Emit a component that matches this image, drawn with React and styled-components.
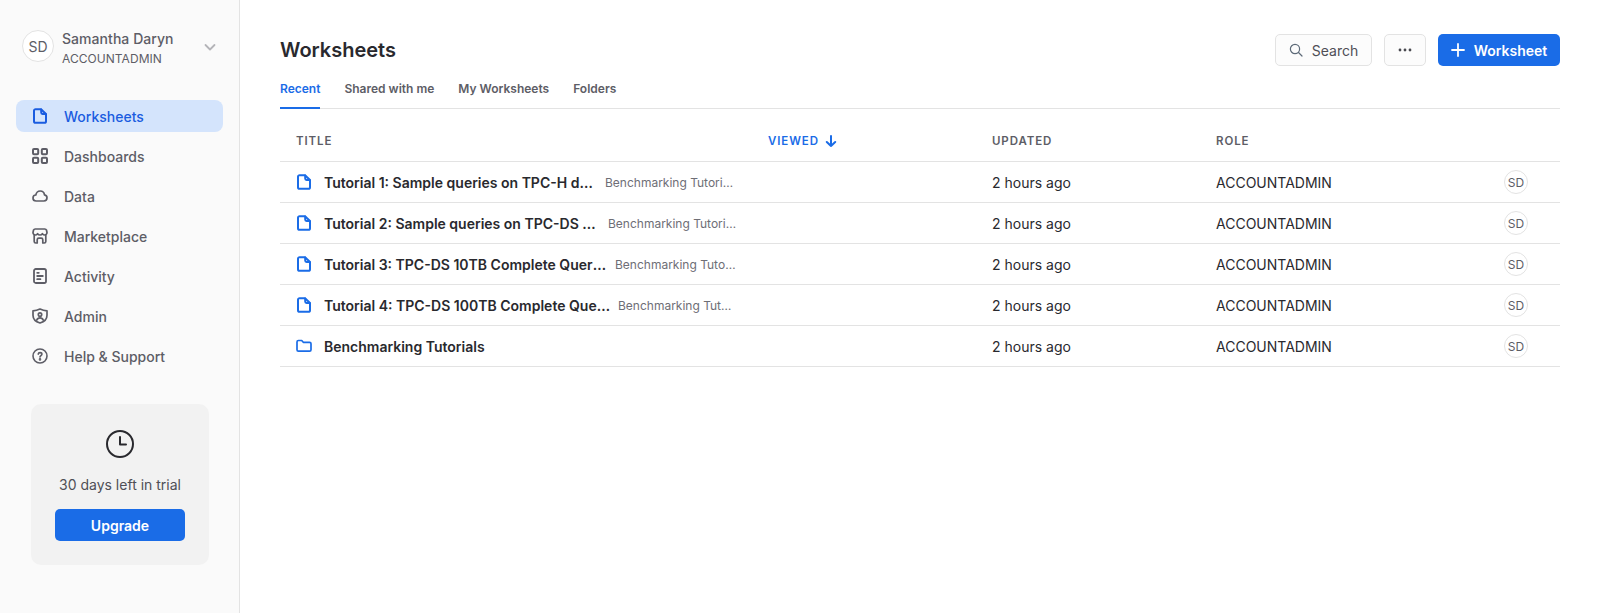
import React from "react";
import styled, { createGlobalStyle } from "styled-components";

const GlobalStyle = createGlobalStyle`
  html, body { margin: 0; padding: 0; height: 100%; background: #fff; }
  body { font-family: Inter, "Liberation Sans", sans-serif; color: #29292e; }
  #root { height: 100%; }
  * { box-sizing: border-box; }
`;

const BLUE = "#1a6ce7";

const Icon = ({ size = 16, width = 1.8, children }) => (
  <svg width={size} height={size} viewBox="0 0 16 16" fill="none" stroke="currentColor" strokeWidth={width} strokeLinecap="round" strokeLinejoin="round">
    {children}
  </svg>
);

const FileIcon = () => (
  <Icon width={2}>
    <path d="M9 1.2H3.6c-.9 0-1.6.7-1.6 1.6v10.4c0 .9.7 1.6 1.6 1.6h8.8c.9 0 1.6-.7 1.6-1.6V6L9 1.2Z" />
    <path d="M9.2 1.6v2.9c0 .8.6 1.4 1.4 1.4h3" />
  </Icon>
);
const FolderIcon = () => (
  <Icon width={1.7}>
    <path d="M1 3.9c0-.8.6-1.4 1.4-1.4h3.3l1.6 1.8h6.3c.8 0 1.4.6 1.4 1.4v6c0 .8-.6 1.4-1.4 1.4H2.4c-.8 0-1.4-.6-1.4-1.4V3.9Z" />
  </Icon>
);
const GridIcon = () => (
  <Icon width={2}>
    <rect x="1" y="1" width="5.2" height="5.2" rx="1" />
    <rect x="9.8" y="1" width="5.2" height="5.2" rx="1" />
    <rect x="1" y="9.8" width="5.2" height="5.2" rx="1" />
    <rect x="9.8" y="9.8" width="5.2" height="5.2" rx="1" />
  </Icon>
);
const CloudIcon = () => (
  <Icon width={1.7}>
    <path d="M4.2 13C2.4 13 1 11.7 1 10s1.2-2.9 2.8-3C4.3 4.6 6 3 8.2 3c2.3 0 4 1.7 4.3 3.9 1.4.2 2.5 1.4 2.5 2.9 0 1.8-1.4 3.2-3.2 3.2H4.2Z" />
  </Icon>
);
const StoreIcon = () => (
  <Icon width={1.7}>
    <path d="M3.2 1h9.6c.8 0 1.4.5 1.7 1.2l.5 2.3c0 1.4-1 2.5-2.3 2.5-1 0-1.7-.5-2.3-1.3-.5.8-1.4 1.3-2.4 1.3s-1.9-.5-2.4-1.3C5 6.5 4.3 7 3.3 7 2 7 1 5.9 1 4.5l.5-2.3C1.8 1.5 2.4 1 3.2 1Z" />
    <path d="M2.2 7v6.4c0 .9.7 1.6 1.6 1.6h1.4v-3.2c0-.9.7-1.6 1.6-1.6h2.4c.9 0 1.6.7 1.6 1.6V15h1.4c.9 0 1.6-.7 1.6-1.6V7" />
  </Icon>
);
const ActivityIcon = () => (
  <Icon width={1.8}>
    <rect x="2" y="1" width="12" height="14" rx="1.8" />
    <path d="M5.2 4.8h1.6M5.2 8h5.6M5.2 11.2h3.2" />
  </Icon>
);
const ShieldIcon = () => (
  <Icon width={1.7}>
    <path d="M8 1c2.2 1 4.3 1.6 7 1.8v4.4c0 3.5-3 6.6-7 7.8-4-1.2-7-4.3-7-7.8V2.8C3.7 2.6 5.8 2 8 1Z" />
    <circle cx="8" cy="6.6" r="1.7" />
    <path d="M4.8 12c.5-1.4 1.7-2.2 3.2-2.2s2.7.8 3.2 2.2" />
  </Icon>
);
const HelpIcon = () => (
  <Icon width={1.6}>
    <circle cx="8" cy="8" r="7" />
    <path d="M6.2 6.2c.1-1 .9-1.6 1.9-1.6s1.8.7 1.8 1.6c0 1.4-1.9 1.5-1.9 2.9" />
    <circle cx="8" cy="11.4" r=".5" fill="currentColor" />
  </Icon>
);

const navItems = [
  { label: "Worksheets", icon: FileIcon, active: true },
  { label: "Dashboards", icon: GridIcon },
  { label: "Data", icon: CloudIcon },
  { label: "Marketplace", icon: StoreIcon },
  { label: "Activity", icon: ActivityIcon },
  { label: "Admin", icon: ShieldIcon },
  { label: "Help & Support", icon: HelpIcon },
];

const rows = [
  { title: "Tutorial 1: Sample queries on TPC-H data", folder: "Benchmarking Tutorials", titleWidth: 275 },
  { title: "Tutorial 2: Sample queries on TPC-DS data", folder: "Benchmarking Tutorials", titleWidth: 278 },
  { title: "Tutorial 3: TPC-DS 10TB Complete Query Test", folder: "Benchmarking Tutorials", titleWidth: 285 },
  { title: "Tutorial 4: TPC-DS 100TB Complete Query Test", folder: "Benchmarking Tutorials", titleWidth: 288 },
  { title: "Benchmarking Tutorials", isFolder: true },
];

export default function App() {
  return (
    <>
      <GlobalStyle />
      <Page>
        <Sidebar>
          <UserRow>
            <Avatar $size={32} $fontSize={14}>SD</Avatar>
            <UserText>
              <UserName>Samantha Daryn</UserName>
              <UserRole>ACCOUNTADMIN</UserRole>
            </UserText>
            <Chevron width="14" height="14" viewBox="0 0 14 14" fill="none" stroke="currentColor" strokeWidth="1.8" strokeLinecap="round" strokeLinejoin="round">
              <path d="M2.5 5l4.5 4.5L11.5 5" />
            </Chevron>
          </UserRow>
          <Nav>
            {navItems.map(({ label, icon: NavIcon, active }) => (
              <NavItem key={label} $active={active}>
                <NavGlyph><NavIcon /></NavGlyph>
                {label}
              </NavItem>
            ))}
          </Nav>
          <TrialCard>
            <svg width="30" height="30" viewBox="0 0 30 30" fill="none" stroke="#29292e" strokeWidth="2" strokeLinecap="round" strokeLinejoin="round">
              <circle cx="15" cy="15" r="13" />
              <path d="M15 8v7.5h6" />
            </svg>
            <TrialText>30 days left in trial</TrialText>
            <UpgradeButton>Upgrade</UpgradeButton>
          </TrialCard>
        </Sidebar>
        <Main>
          <TopBar>
            <Title>Worksheets</Title>
            <Actions>
              <GhostButton $width={97}>
                <svg width="14" height="14" viewBox="0 0 14 14" fill="none" stroke="#5d6a78" strokeWidth="1.2" strokeLinecap="round">
                  <circle cx="6" cy="6" r="4.6" />
                  <path d="M9.5 9.5l3.5 3.5" />
                </svg>
                Search
              </GhostButton>
              <GhostButton $width={42}>
                <svg width="14" height="4" viewBox="0 0 14 4" fill="#4a4a50">
                  <circle cx="2" cy="2" r="1.4" />
                  <circle cx="7" cy="2" r="1.4" />
                  <circle cx="12" cy="2" r="1.4" />
                </svg>
              </GhostButton>
              <PrimaryButton>
                <svg width="14" height="14" viewBox="0 0 14 14" fill="none" stroke="#fff" strokeWidth="1.8" strokeLinecap="round">
                  <path d="M7 1v12M1 7h12" />
                </svg>
                Worksheet
              </PrimaryButton>
            </Actions>
          </TopBar>
          <Tabs>
            <Tab $active>Recent</Tab>
            <Tab>Shared with me</Tab>
            <Tab>My Worksheets</Tab>
            <Tab>Folders</Tab>
          </Tabs>
          <HeadRow>
            <HeadCell>TITLE</HeadCell>
            <HeadCell $active>
              VIEWED
              <svg width="12" height="12" viewBox="0 0 12 12" fill="none" stroke={BLUE} strokeWidth="2" strokeLinecap="round" strokeLinejoin="round">
                <path d="M6 1v10M1.8 7L6 11l4.2-4" />
              </svg>
            </HeadCell>
            <HeadCell>UPDATED</HeadCell>
            <HeadCell>ROLE</HeadCell>
            <HeadCell />
          </HeadRow>
          {rows.map((row) => (
            <Row key={row.title}>
              <TitleCell>
                <RowGlyph>{row.isFolder ? <FolderIcon /> : <FileIcon />}</RowGlyph>
                <RowTitle $width={row.titleWidth}>{row.title}</RowTitle>
                {row.folder && <RowFolder>{row.folder}</RowFolder>}
              </TitleCell>
              <Cell />
              <Cell>2 hours ago</Cell>
              <Cell>ACCOUNTADMIN</Cell>
              <AvatarCell>
                <Avatar $size={24} $fontSize={12}>SD</Avatar>
              </AvatarCell>
            </Row>
          ))}
        </Main>
      </Page>
    </>
  );
}

const Page = styled.div`
  display: flex;
  height: 613px;
  overflow: hidden;
`;

const Sidebar = styled.aside`
  width: 240px;
  flex: none;
  background: #fafafa;
  border-right: 1px solid #e3e3e3;
  padding: 30px 16px 0;
  display: flex;
  flex-direction: column;
`;

const UserRow = styled.div`
  display: flex;
  align-items: center;
  height: 32px;
  padding-left: 6px;
`;

const Avatar = styled.div`
  width: ${(p) => p.$size}px;
  height: ${(p) => p.$size}px;
  flex: none;
  border-radius: 50%;
  background: #fff;
  border: 1px solid #e3e3e3;
  color: #5d5d66;
  font-size: ${(p) => p.$fontSize}px;
  display: flex;
  align-items: center;
  justify-content: center;
`;

const UserText = styled.div`
  margin-left: 8px;
  margin-top: 3px;
  display: flex;
  flex-direction: column;
  gap: 4px;
`;

const UserName = styled.div`
  font-size: 14px;
  line-height: 17px;
  font-weight: 500;
  letter-spacing: 0.05px;
  color: #5d5d66;
`;

const UserRole = styled.div`
  font-size: 12px;
  line-height: 15px;
  letter-spacing: 0.05px;
  color: #5d5d66;
`;

const Chevron = styled.svg`
  color: #b4b4b8;
  margin-left: 29px;
  margin-top: 1px;
`;

const Nav = styled.nav`
  display: flex;
  flex-direction: column;
  gap: 8px;
  margin-top: 38px;
`;

const NavItem = styled.a`
  height: 32px;
  display: flex;
  align-items: center;
  gap: 16px;
  padding-left: 16px;
  border-radius: 8px;
  font-size: 14px;
  font-weight: 500;
  color: ${(p) => (p.$active ? "#1a5ce0" : "#5d5d66")};
  background: ${(p) => (p.$active ? "#d4e4fc" : "transparent")};
`;

const NavGlyph = styled.span`
  display: flex;
  color: inherit;
`;

const TrialCard = styled.div`
  margin: 32px 14px 0 15px;
  height: 161px;
  border-radius: 10px;
  background: #f2f2f2;
  display: flex;
  flex-direction: column;
  align-items: center;
  padding-top: 25px;
`;

const TrialText = styled.div`
  margin-top: 16px;
  font-size: 14px;
  line-height: 20px;
  color: #4f4f56;
`;

const UpgradeButton = styled.button`
  margin-top: 14px;
  width: 130px;
  height: 32px;
  border: none;
  border-radius: 5px;
  background: ${BLUE};
  color: #fff;
  font: 600 14px Inter, sans-serif;
`;

const Main = styled.main`
  flex: 1;
  min-width: 0;
  padding: 34px 40px 0;
`;

const TopBar = styled.div`
  display: flex;
  align-items: center;
  justify-content: space-between;
  height: 32px;
`;

const Title = styled.h1`
  margin: 0;
  font-size: 20px;
  font-weight: 600;
  color: #29292e;
`;

const Actions = styled.div`
  display: flex;
  gap: 12px;
`;

const GhostButton = styled.button`
  width: ${(p) => p.$width}px;
  height: 32px;
  display: flex;
  align-items: center;
  justify-content: center;
  gap: 9px;
  border: 1px solid #e3e3e3;
  border-radius: 5px;
  background: #fcfcfc;
  color: #4f4f56;
  font: 400 14px Inter, sans-serif;
`;

const PrimaryButton = styled.button`
  width: 122px;
  height: 32px;
  display: flex;
  align-items: center;
  justify-content: center;
  gap: 9px;
  border: none;
  border-radius: 5px;
  background: ${BLUE};
  color: #fff;
  font: 600 14px Inter, sans-serif;
`;

const Tabs = styled.div`
  display: flex;
  gap: 24px;
  margin-top: 9px;
  height: 34px;
  border-bottom: 1px solid #e3e3e3;
`;

const Tab = styled.div`
  height: 34px;
  padding-top: 6px;
  font-size: 12px;
  line-height: 16px;
  font-weight: 600;
  color: ${(p) => (p.$active ? BLUE : "#5d5d66")};
  border-bottom: 2px solid ${(p) => (p.$active ? BLUE : "transparent")};
`;

const columns = "472px 224px 224px 1fr 72px";

const HeadRow = styled.div`
  display: grid;
  grid-template-columns: ${columns};
  height: 53px;
  padding-top: 12px;
  border-bottom: 1px solid #e3e3e3;
`;

const HeadCell = styled.div`
  display: flex;
  align-items: center;
  gap: 6px;
  padding: 0 16px;
  font-size: 11.5px;
  font-weight: 600;
  letter-spacing: 0.9px;
  color: ${(p) => (p.$active ? BLUE : "#5d5d66")};
`;

const Row = styled.div`
  display: grid;
  grid-template-columns: ${columns};
  height: 41px;
  border-bottom: 1px solid #e3e3e3;
`;

const Cell = styled.div`
  display: flex;
  align-items: center;
  padding: 0 16px;
  font-size: 14px;
  color: #29292e;
`;

const TitleCell = styled(Cell)`
  min-width: 0;
  padding-right: 14px;
`;

const RowGlyph = styled.span`
  display: flex;
  color: ${BLUE};
  margin-right: 12px;
  flex: none;
`;

const RowTitle = styled.span`
  flex: none;
  max-width: ${(p) => (p.$width ? `${p.$width}px` : "none")};
  overflow: hidden;
  white-space: nowrap;
  text-overflow: ellipsis;
  font-weight: 600;
  color: #29292e;
`;

const RowFolder = styled.span`
  flex: 1;
  min-width: 0;
  margin-left: 6px;
  overflow: hidden;
  white-space: nowrap;
  text-overflow: ellipsis;
  font-size: 12px;
  color: #6e6e76;
`;

const AvatarCell = styled(Cell)`
  justify-content: flex-end;
  padding: 0 32px 0 0;
`;
